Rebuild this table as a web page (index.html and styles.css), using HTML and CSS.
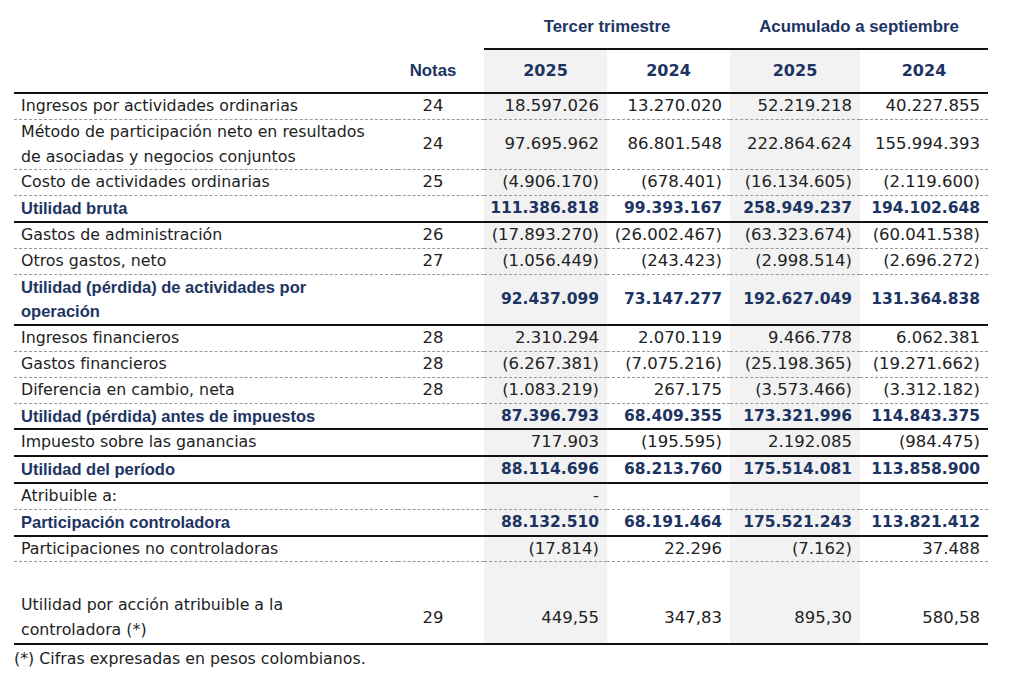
FILE: index.html
```html
<!DOCTYPE html>
<html lang="es">
<head>
<meta charset="utf-8">
<title>Estado de resultados</title>
<link rel="stylesheet" href="styles.css">
</head>
<body>
<div class="page">
<table class="er">
<colgroup>
<col class="c-label"><col class="c-notas"><col class="c-n1"><col class="c-n2"><col class="c-n3"><col class="c-n4">
</colgroup>
<thead>
<tr class="h1"><th></th><th></th><th colspan="2" class="grp">Tercer trimestre</th><th colspan="2" class="grp">Acumulado a septiembre</th></tr>
<tr class="h2"><th></th><th class="notas">Notas</th><th class="g">2025</th><th>2024</th><th class="g">2025</th><th>2024</th></tr>
</thead>
<tbody>
<tr class="d"><td class="lbl">Ingresos por actividades ordinarias</td><td class="nt">24</td><td class="g">18.597.026</td><td>13.270.020</td><td class="g">52.219.218</td><td>40.227.855</td></tr>
<tr class="d"><td class="lbl">Método de participación neto en resultados<br>de asociadas y negocios conjuntos</td><td class="nt">24</td><td class="g">97.695.962</td><td>86.801.548</td><td class="g">222.864.624</td><td>155.994.393</td></tr>
<tr class="d"><td class="lbl">Costo de actividades ordinarias</td><td class="nt">25</td><td class="g">(4.906.170)</td><td>(678.401)</td><td class="g">(16.134.605)</td><td>(2.119.600)</td></tr>
<tr class="t b"><td class="lbl">Utilidad bruta</td><td class="nt"></td><td class="g">111.386.818</td><td>99.393.167</td><td class="g">258.949.237</td><td>194.102.648</td></tr>
<tr class="d"><td class="lbl">Gastos de administración</td><td class="nt">26</td><td class="g">(17.893.270)</td><td>(26.002.467)</td><td class="g">(63.323.674)</td><td>(60.041.538)</td></tr>
<tr class="d"><td class="lbl">Otros gastos, neto</td><td class="nt">27</td><td class="g">(1.056.449)</td><td>(243.423)</td><td class="g">(2.998.514)</td><td>(2.696.272)</td></tr>
<tr class="t b"><td class="lbl">Utilidad (pérdida) de actividades por<br>operación</td><td class="nt"></td><td class="g">92.437.099</td><td>73.147.277</td><td class="g">192.627.049</td><td>131.364.838</td></tr>
<tr class="d"><td class="lbl">Ingresos financieros</td><td class="nt">28</td><td class="g">2.310.294</td><td>2.070.119</td><td class="g">9.466.778</td><td>6.062.381</td></tr>
<tr class="d"><td class="lbl">Gastos financieros</td><td class="nt">28</td><td class="g">(6.267.381)</td><td>(7.075.216)</td><td class="g">(25.198.365)</td><td>(19.271.662)</td></tr>
<tr class="d"><td class="lbl">Diferencia en cambio, neta</td><td class="nt">28</td><td class="g">(1.083.219)</td><td>267.175</td><td class="g">(3.573.466)</td><td>(3.312.182)</td></tr>
<tr class="t b"><td class="lbl">Utilidad (pérdida) antes de impuestos</td><td class="nt"></td><td class="g">87.396.793</td><td>68.409.355</td><td class="g">173.321.996</td><td>114.843.375</td></tr>
<tr class="t"><td class="lbl">Impuesto sobre las ganancias</td><td class="nt"></td><td class="g">717.903</td><td>(195.595)</td><td class="g">2.192.085</td><td>(984.475)</td></tr>
<tr class="t b"><td class="lbl">Utilidad del período</td><td class="nt"></td><td class="g">88.114.696</td><td>68.213.760</td><td class="g">175.514.081</td><td>113.858.900</td></tr>
<tr class="d"><td class="lbl">Atribuible a:</td><td class="nt"></td><td class="g">-</td><td></td><td class="g"></td><td></td></tr>
<tr class="t b"><td class="lbl">Participación controladora</td><td class="nt"></td><td class="g">88.132.510</td><td>68.191.464</td><td class="g">175.521.243</td><td>113.821.412</td></tr>
<tr class="d"><td class="lbl">Participaciones no controladoras</td><td class="nt"></td><td class="g">(17.814)</td><td>22.296</td><td class="g">(7.162)</td><td>37.488</td></tr>
<tr class="sp"><td></td><td></td><td class="g"></td><td></td><td class="g"></td><td></td></tr>
<tr class="t"><td class="lbl">Utilidad por acción atribuible a la<br>controladora (*)</td><td class="nt">29</td><td class="g">449,55</td><td>347,83</td><td class="g">895,30</td><td>580,58</td></tr>
</tbody>
</table>
<p class="foot">(*) Cifras expresadas en pesos colombianos.</p>
</div>
</body>
</html>
```

FILE: styles.css
```css
html, body {
  margin: 0;
  padding: 0;
  background: #ffffff;
}

.page {
  padding-left: 14px;
  font-family: "DejaVu Sans", sans-serif;
  color: #222222;
}

.er {
  border-collapse: separate;
  border-spacing: 0;
  table-layout: fixed;
  width: 974px;
}

.c-label { width: 384px; }
.c-notas { width: 86px; }
.c-n1, .c-n2 { width: 123px; }
.c-n3 { width: 130px; }
.c-n4 { width: 128px; }

.er th {
  font-family: "Liberation Sans", sans-serif;
  font-weight: bold;
  font-size: 16.8px;
  color: #1d3463;
  padding: 0;
}

.er .h1 th {
  height: 37px;
  vertical-align: bottom;
  padding-bottom: 11px;
  line-height: 20px;
  text-align: center;
}

.er .h1 th.grp {
  border-bottom: 2px solid #111111;
}

.er .h2 th {
  height: 42px;
  line-height: 20px;
  vertical-align: middle;
  text-align: center;
  border-bottom: 2px solid #111111;
  font-family: "DejaVu Sans", sans-serif;
  font-size: 16px;
}

.er .h2 th.notas {
  font-family: "Liberation Sans", sans-serif;
  font-size: 16.8px;
  padding-right: 16px;
}

.er .g {
  background: #f2f2f2;
}

.er td {
  padding: 0 8px 0 0;
  font-size: 16.5px;
  line-height: 24.8px;
  text-align: right;
  vertical-align: middle;
  white-space: nowrap;
}

.er td.lbl {
  text-align: left;
  padding: 0 0 0 7px;
  font-size: 15.8px;
}

.er td.nt {
  text-align: center;
  padding: 0 16px 0 0;
}

.er tr.d td {
  border-bottom: 1px dashed #9a9a9a;
}

.er tr.t td {
  border-bottom: 2px solid #111111;
}

.er tr.b td {
  color: #1d3463;
  font-weight: bold;
  font-size: 15.5px;
}

.er tr.b td.lbl {
  font-family: "Liberation Sans", sans-serif;
  font-size: 16.5px;
}

.er tr.sp td {
  height: 31px;
  line-height: 31px;
}

.foot {
  margin: 0;
  font-size: 15.8px;
  line-height: 27px;
  color: #222222;
}
```
